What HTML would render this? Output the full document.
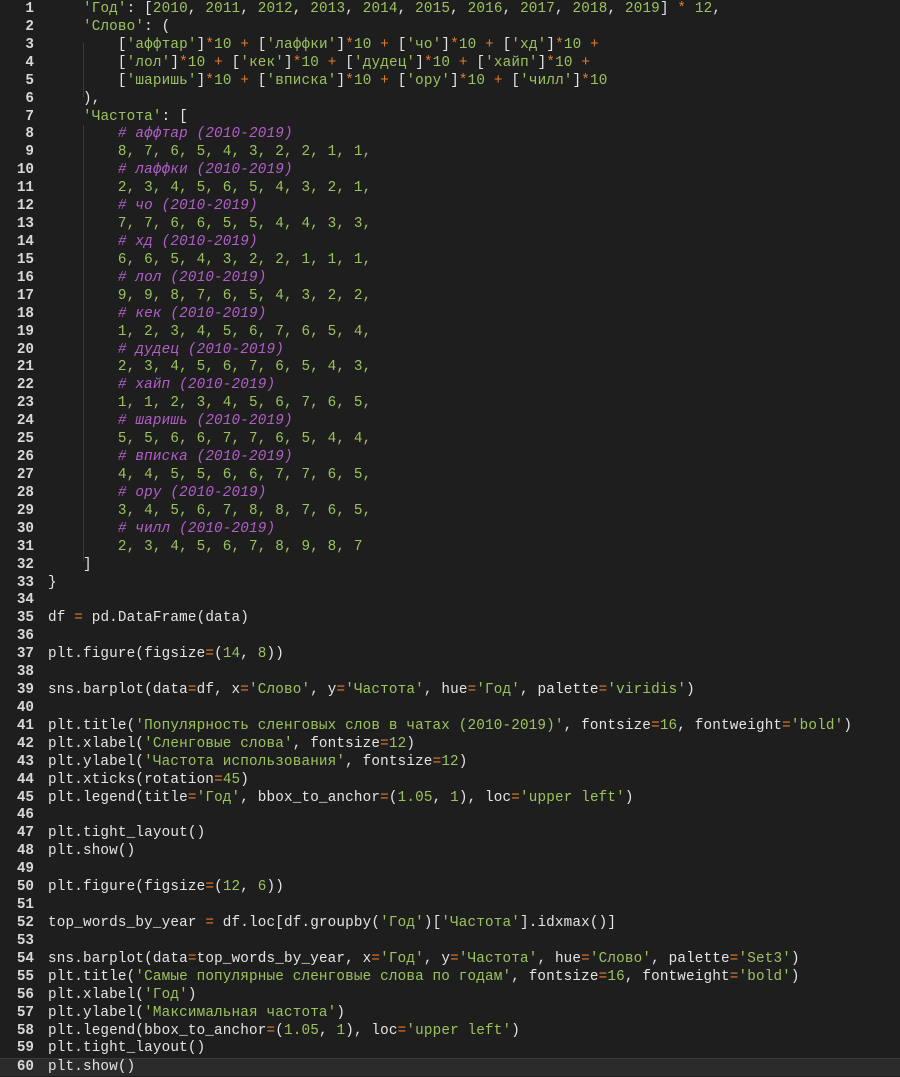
<!DOCTYPE html>
<html><head><meta charset="utf-8"><style>
html,body{margin:0;padding:0;background:#1e1e1e;width:900px;height:1074px;overflow:hidden}
.wrap{position:absolute;top:1px;left:0;width:900px}
.l{height:17.93px;line-height:17.93px;white-space:pre;font-family:"Liberation Mono","DejaVu Sans Mono",monospace;font-size:14.3px;letter-spacing:0.16px;color:#e4e4e4;position:relative}
.g{position:absolute;left:0;width:34px;text-align:right;color:#d8d8d8;font-weight:bold;letter-spacing:0}
.c0{position:absolute;left:48px}
.s{color:#9cc35e}.n{color:#9cc35e}.o{color:#e57b2c}.c{color:#b35fcb;font-style:italic}
.cur{background:#2b2b2b;border-top:1px solid #3a3a3a;box-sizing:border-box}
.guide{position:absolute;left:83px;width:1px;background:#3a3a3a}
</style></head><body>
<div class="guide" style="top:43px;height:54px"></div>
<div class="guide" style="top:125px;height:436px"></div>
<div class="wrap">
<div class="l"><span class="g">1</span><span class="c0">    <span class="s">'Год'</span>: [<span class="n">2010</span>, <span class="n">2011</span>, <span class="n">2012</span>, <span class="n">2013</span>, <span class="n">2014</span>, <span class="n">2015</span>, <span class="n">2016</span>, <span class="n">2017</span>, <span class="n">2018</span>, <span class="n">2019</span>] <span class="o">*</span> <span class="n">12</span>,</span></div>
<div class="l"><span class="g">2</span><span class="c0">    <span class="s">'Слово'</span>: (</span></div>
<div class="l"><span class="g">3</span><span class="c0">        [<span class="s">'аффтар'</span>]<span class="o">*</span><span class="n">10</span> <span class="o">+</span> [<span class="s">'лаффки'</span>]<span class="o">*</span><span class="n">10</span> <span class="o">+</span> [<span class="s">'чо'</span>]<span class="o">*</span><span class="n">10</span> <span class="o">+</span> [<span class="s">'хд'</span>]<span class="o">*</span><span class="n">10</span> <span class="o">+</span></span></div>
<div class="l"><span class="g">4</span><span class="c0">        [<span class="s">'лол'</span>]<span class="o">*</span><span class="n">10</span> <span class="o">+</span> [<span class="s">'кек'</span>]<span class="o">*</span><span class="n">10</span> <span class="o">+</span> [<span class="s">'дудец'</span>]<span class="o">*</span><span class="n">10</span> <span class="o">+</span> [<span class="s">'хайп'</span>]<span class="o">*</span><span class="n">10</span> <span class="o">+</span></span></div>
<div class="l"><span class="g">5</span><span class="c0">        [<span class="s">'шаришь'</span>]<span class="o">*</span><span class="n">10</span> <span class="o">+</span> [<span class="s">'вписка'</span>]<span class="o">*</span><span class="n">10</span> <span class="o">+</span> [<span class="s">'ору'</span>]<span class="o">*</span><span class="n">10</span> <span class="o">+</span> [<span class="s">'чилл'</span>]<span class="o">*</span><span class="n">10</span></span></div>
<div class="l"><span class="g">6</span><span class="c0">    ),</span></div>
<div class="l"><span class="g">7</span><span class="c0">    <span class="s">'Частота'</span>: [</span></div>
<div class="l"><span class="g">8</span><span class="c0">        <span class="c"># аффтар (2010-2019)</span></span></div>
<div class="l"><span class="g">9</span><span class="c0">        <span class="n">8, 7, 6, 5, 4, 3, 2, 2, 1, 1,</span></span></div>
<div class="l"><span class="g">10</span><span class="c0">        <span class="c"># лаффки (2010-2019)</span></span></div>
<div class="l"><span class="g">11</span><span class="c0">        <span class="n">2, 3, 4, 5, 6, 5, 4, 3, 2, 1,</span></span></div>
<div class="l"><span class="g">12</span><span class="c0">        <span class="c"># чо (2010-2019)</span></span></div>
<div class="l"><span class="g">13</span><span class="c0">        <span class="n">7, 7, 6, 6, 5, 5, 4, 4, 3, 3,</span></span></div>
<div class="l"><span class="g">14</span><span class="c0">        <span class="c"># хд (2010-2019)</span></span></div>
<div class="l"><span class="g">15</span><span class="c0">        <span class="n">6, 6, 5, 4, 3, 2, 2, 1, 1, 1,</span></span></div>
<div class="l"><span class="g">16</span><span class="c0">        <span class="c"># лол (2010-2019)</span></span></div>
<div class="l"><span class="g">17</span><span class="c0">        <span class="n">9, 9, 8, 7, 6, 5, 4, 3, 2, 2,</span></span></div>
<div class="l"><span class="g">18</span><span class="c0">        <span class="c"># кек (2010-2019)</span></span></div>
<div class="l"><span class="g">19</span><span class="c0">        <span class="n">1, 2, 3, 4, 5, 6, 7, 6, 5, 4,</span></span></div>
<div class="l"><span class="g">20</span><span class="c0">        <span class="c"># дудец (2010-2019)</span></span></div>
<div class="l"><span class="g">21</span><span class="c0">        <span class="n">2, 3, 4, 5, 6, 7, 6, 5, 4, 3,</span></span></div>
<div class="l"><span class="g">22</span><span class="c0">        <span class="c"># хайп (2010-2019)</span></span></div>
<div class="l"><span class="g">23</span><span class="c0">        <span class="n">1, 1, 2, 3, 4, 5, 6, 7, 6, 5,</span></span></div>
<div class="l"><span class="g">24</span><span class="c0">        <span class="c"># шаришь (2010-2019)</span></span></div>
<div class="l"><span class="g">25</span><span class="c0">        <span class="n">5, 5, 6, 6, 7, 7, 6, 5, 4, 4,</span></span></div>
<div class="l"><span class="g">26</span><span class="c0">        <span class="c"># вписка (2010-2019)</span></span></div>
<div class="l"><span class="g">27</span><span class="c0">        <span class="n">4, 4, 5, 5, 6, 6, 7, 7, 6, 5,</span></span></div>
<div class="l"><span class="g">28</span><span class="c0">        <span class="c"># ору (2010-2019)</span></span></div>
<div class="l"><span class="g">29</span><span class="c0">        <span class="n">3, 4, 5, 6, 7, 8, 8, 7, 6, 5,</span></span></div>
<div class="l"><span class="g">30</span><span class="c0">        <span class="c"># чилл (2010-2019)</span></span></div>
<div class="l"><span class="g">31</span><span class="c0">        <span class="n">2, 3, 4, 5, 6, 7, 8, 9, 8, 7</span></span></div>
<div class="l"><span class="g">32</span><span class="c0">    ]</span></div>
<div class="l"><span class="g">33</span><span class="c0">}</span></div>
<div class="l"><span class="g">34</span></div>
<div class="l"><span class="g">35</span><span class="c0">df <span class="o">=</span> pd.DataFrame(data)</span></div>
<div class="l"><span class="g">36</span></div>
<div class="l"><span class="g">37</span><span class="c0">plt.figure(figsize<span class="o">=</span>(<span class="n">14</span>, <span class="n">8</span>))</span></div>
<div class="l"><span class="g">38</span></div>
<div class="l"><span class="g">39</span><span class="c0">sns.barplot(data<span class="o">=</span>df, x<span class="o">=</span><span class="s">'Слово'</span>, y<span class="o">=</span><span class="s">'Частота'</span>, hue<span class="o">=</span><span class="s">'Год'</span>, palette<span class="o">=</span><span class="s">'viridis'</span>)</span></div>
<div class="l"><span class="g">40</span></div>
<div class="l"><span class="g">41</span><span class="c0">plt.title(<span class="s">'Популярность сленговых слов в чатах (2010-2019)'</span>, fontsize<span class="o">=</span><span class="n">16</span>, fontweight<span class="o">=</span><span class="s">'bold'</span>)</span></div>
<div class="l"><span class="g">42</span><span class="c0">plt.xlabel(<span class="s">'Сленговые слова'</span>, fontsize<span class="o">=</span><span class="n">12</span>)</span></div>
<div class="l"><span class="g">43</span><span class="c0">plt.ylabel(<span class="s">'Частота использования'</span>, fontsize<span class="o">=</span><span class="n">12</span>)</span></div>
<div class="l"><span class="g">44</span><span class="c0">plt.xticks(rotation<span class="o">=</span><span class="n">45</span>)</span></div>
<div class="l"><span class="g">45</span><span class="c0">plt.legend(title<span class="o">=</span><span class="s">'Год'</span>, bbox_to_anchor<span class="o">=</span>(<span class="n">1.05</span>, <span class="n">1</span>), loc<span class="o">=</span><span class="s">'upper left'</span>)</span></div>
<div class="l"><span class="g">46</span></div>
<div class="l"><span class="g">47</span><span class="c0">plt.tight_layout()</span></div>
<div class="l"><span class="g">48</span><span class="c0">plt.show()</span></div>
<div class="l"><span class="g">49</span></div>
<div class="l"><span class="g">50</span><span class="c0">plt.figure(figsize<span class="o">=</span>(<span class="n">12</span>, <span class="n">6</span>))</span></div>
<div class="l"><span class="g">51</span></div>
<div class="l"><span class="g">52</span><span class="c0">top_words_by_year <span class="o">=</span> df.loc[df.groupby(<span class="s">'Год'</span>)[<span class="s">'Частота'</span>].idxmax()]</span></div>
<div class="l"><span class="g">53</span></div>
<div class="l"><span class="g">54</span><span class="c0">sns.barplot(data<span class="o">=</span>top_words_by_year, x<span class="o">=</span><span class="s">'Год'</span>, y<span class="o">=</span><span class="s">'Частота'</span>, hue<span class="o">=</span><span class="s">'Слово'</span>, palette<span class="o">=</span><span class="s">'Set3'</span>)</span></div>
<div class="l"><span class="g">55</span><span class="c0">plt.title(<span class="s">'Самые популярные сленговые слова по годам'</span>, fontsize<span class="o">=</span><span class="n">16</span>, fontweight<span class="o">=</span><span class="s">'bold'</span>)</span></div>
<div class="l"><span class="g">56</span><span class="c0">plt.xlabel(<span class="s">'Год'</span>)</span></div>
<div class="l"><span class="g">57</span><span class="c0">plt.ylabel(<span class="s">'Максимальная частота'</span>)</span></div>
<div class="l"><span class="g">58</span><span class="c0">plt.legend(bbox_to_anchor<span class="o">=</span>(<span class="n">1.05</span>, <span class="n">1</span>), loc<span class="o">=</span><span class="s">'upper left'</span>)</span></div>
<div class="l"><span class="g">59</span><span class="c0">plt.tight_layout()</span></div>
<div class="l cur"><span class="g">60</span><span class="c0">plt.show()</span></div>
</div>
</body></html>
